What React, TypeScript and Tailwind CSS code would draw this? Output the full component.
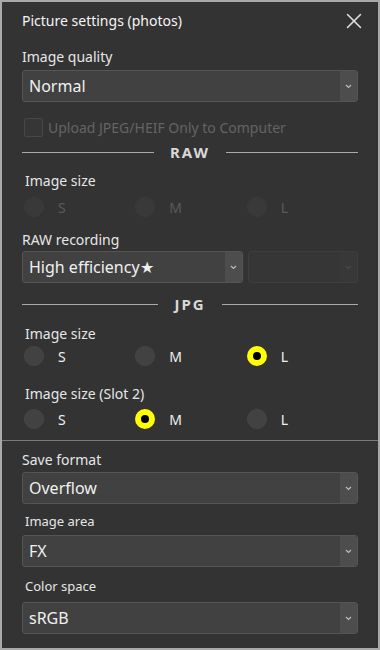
import { X } from "lucide-react";

type Opt = { label: string; state: "off" | "on" | "disabled" };

const Label = ({ text, small }: { text: string; small?: boolean }) => (
  <div className={`text-[#e6e6e6] ${small ? "text-[13px] pl-[3px]" : "text-[14px]"} leading-[20px]`}>{text}</div>
);

const Select = ({ value, disabled, className = "" }: { value: string; disabled?: boolean; className?: string }) => (
  <div
    className={`flex h-[32px] rounded-[3px] border ${
      disabled ? "border-[#3e3e3e] bg-[#363636]" : "border-[#555] bg-[#414141]"
    } ${className}`}
  >
    <div className="flex-1 pl-[6px] text-[16px] leading-[30px] text-[#f0f0f0]">{value}</div>
    <div
      className={`w-[17px] flex items-center justify-center rounded-r-[3px] ${
        disabled ? "bg-[#383838]" : "bg-[#4d4d4d]"
      }`}
    >
      <svg width="7" height="5" viewBox="0 0 7 5">
        <path d="M1 1 L3.5 3.5 L6 1" fill="none" stroke={disabled ? "#4a4a4a" : "#bbb"} strokeWidth="1.2" />
      </svg>
    </div>
  </div>
);

const Divider = ({ text }: { text: string }) => (
  <div className="flex items-center gap-[16px] h-[20px]">
    <div className="flex-1 h-px bg-[#aaa]" />
    <div className="font-bold text-[15px] tracking-[2px] text-[#d8d8d8]">{text}</div>
    <div className="flex-1 h-px bg-[#aaa]" />
  </div>
);

const Radio = ({ o }: { o: Opt }) => (
  <div className="flex items-center w-[112px]">
    {o.state === "on" ? (
      <div className="w-[20px] h-[20px] rounded-full bg-[#ffff00] flex items-center justify-center">
        <div className="w-[8px] h-[8px] rounded-full bg-black" />
      </div>
    ) : (
      <div
        className={`w-[20px] h-[20px] rounded-full ${
          o.state === "disabled" ? "bg-[#393939] border border-[#3b3b3b]" : "bg-[#424242] border border-[#464646]"
        }`}
      />
    )}
    <span className={`ml-[14px] text-[14px] ${o.state === "disabled" ? "text-[#5a5a5a]" : "text-[#f0f0f0]"}`}>
      {o.label}
    </span>
  </div>
);

const RadioRow = ({ states }: { states: Opt["state"][] }) => (
  <div className="flex pl-[2px] h-[24px] items-center">
    {["S", "M", "L"].map((l, i) => (
      <Radio key={l} o={{ label: l, state: states[i] }} />
    ))}
  </div>
);

export default function App() {
  return (
    <div
      className="w-[380px] h-[650px] bg-[#a9a9a9] pl-[2px] pt-[2px] pr-[2px] pb-[2px]"
      style={{ fontFamily: '"Noto Sans", "Open Sans", sans-serif' }}
    >
      <div className="h-full bg-[#333333] flex flex-col">
        <div className="px-[20px]">
          <div className="flex items-center justify-between h-[36px] pt-[1px]">
            <span className="text-[14px] text-[#f5f5f5]">Picture settings (photos)</span>
            <X size={26} strokeWidth={1.4} className="text-[#e0e0e0] mr-[-9px]" />
          </div>
          <div className="mt-[9px]">
            <Label text="Image quality" />
          </div>
          <div className="mt-[3px]">
            <Select value="Normal" />
          </div>
          <div className="flex items-center mt-[15px] pl-[2px]">
            <div className="w-[19px] h-[19px] rounded-[2px] border border-[#474747] bg-[#363636]" />
            <span className="ml-[5px] text-[14px] text-[#646464]">Upload JPEG/HEIF Only to Computer</span>
          </div>
          <div className="mt-[4px]">
            <Divider text="RAW" />
          </div>
          <div className="mt-[9px] pl-[3px]">
            <Label text="Image size" />
          </div>
          <div className="mt-[4px]">
            <RadioRow states={["disabled", "disabled", "disabled"]} />
          </div>
          <div className="mt-[11px]">
            <Label text="RAW recording" />
          </div>
          <div className="mt-[1px] flex gap-[5px]">
            <Select value="High efficiency★" className="w-[221px]" />
            <Select value="" disabled className="flex-1" />
          </div>
          <div className="mt-[11px]">
            <Divider text="JPG" />
          </div>
          <div className="mt-[10px] pl-[3px]">
            <Label text="Image size" />
          </div>
          <div className="mt-[0px]">
            <RadioRow states={["off", "off", "on"]} />
          </div>
          <div className="mt-[16px] pl-[3px]">
            <Label text="Image size (Slot 2)" />
          </div>
          <div className="mt-[3px]">
            <RadioRow states={["off", "on", "off"]} />
          </div>
        </div>
        <div className="h-px bg-[#7a7a7a] mt-[9px]" />
        <div className="px-[20px]">
          <div className="mt-[9px]">
            <Label text="Save format" />
          </div>
          <div className="mt-[2px]">
            <Select value="Overflow" />
          </div>
          <div className="mt-[7px]">
            <Label text="Image area" small />
          </div>
          <div className="mt-[4px]">
            <Select value="FX" />
          </div>
          <div className="mt-[9px]">
            <Label text="Color space" small />
          </div>
          <div className="mt-[6px]">
            <Select value="sRGB" />
          </div>
        </div>
      </div>
    </div>
  );
}
